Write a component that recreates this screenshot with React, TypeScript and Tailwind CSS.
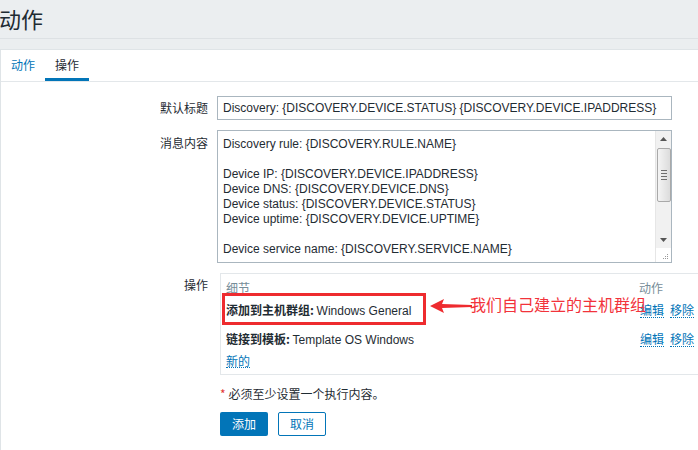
import React from "react";

const messageLines = [
  "Discovery rule: {DISCOVERY.RULE.NAME}",
  "",
  "Device IP: {DISCOVERY.DEVICE.IPADDRESS}",
  "Device DNS: {DISCOVERY.DEVICE.DNS}",
  "Device status: {DISCOVERY.DEVICE.STATUS}",
  "Device uptime: {DISCOVERY.DEVICE.UPTIME}",
  "",
  "Device service name: {DISCOVERY.SERVICE.NAME}",
];

const operations = [
  { label: "添加到主机群组:", value: "Windows General" },
  { label: "链接到模板:", value: "Template OS Windows" },
];

const FakeScrollbar = () => {
  return (
    <div className="w-[16px] h-full bg-[#f1f1f1] flex flex-col items-center border-l border-[#e6e6e6]">
      <div className="h-[16px] flex items-center justify-center">
        <svg width="7" height="4" viewBox="0 0 7 4">
          <path d="M0 4 L3.5 0 L7 4 Z" fill="#555" />
        </svg>
      </div>
      <div className="mt-[1px] w-[14px] h-[54px] rounded-[2px] border border-[#a9a9a9] bg-gradient-to-r from-[#f4f4f4] to-[#dcdcdc] flex flex-col items-center justify-center gap-[2px]">
        <div className="w-[6px] h-[1px] bg-[#6d6d6d]" />
        <div className="w-[6px] h-[1px] bg-[#6d6d6d]" />
        <div className="w-[6px] h-[1px] bg-[#6d6d6d]" />
        <div className="w-[6px] h-[1px] bg-[#6d6d6d]" />
      </div>
      <div className="flex-1" />
      <div className="h-[16px] flex items-center justify-center">
        <svg width="7" height="4" viewBox="0 0 7 4">
          <path d="M0 0 L3.5 4 L7 0 Z" fill="#555" />
        </svg>
      </div>
      <div className="h-[14px] w-full bg-white flex items-end justify-end pr-[2px] pb-[2px]">
        <svg width="7" height="7" viewBox="0 0 7 7">
          <rect x="5" y="1" width="1" height="1" fill="#999" />
          <rect x="3" y="3" width="1" height="1" fill="#999" />
          <rect x="5" y="3" width="1" height="1" fill="#999" />
          <rect x="1" y="5" width="1" height="1" fill="#999" />
          <rect x="3" y="5" width="1" height="1" fill="#999" />
          <rect x="5" y="5" width="1" height="1" fill="#999" />
        </svg>
      </div>
    </div>
  );
};

const App = () => {
  return (
    <div className="w-[698px] h-[450px] overflow-hidden bg-[#ebeef0] text-[12px] text-[#1f2c33] font-['Liberation_Sans','Noto_Sans_CJK_SC',sans-serif]">
      {/* page title */}
      <div className="h-[39px] border-b border-[#dde1e4] flex items-center">
        <h1 className="text-[22px] leading-none text-[#1f2c33] font-['Noto_Sans_CJK_SC',sans-serif] -ml-[1px] -mt-[2px]">
          动作
        </h1>
      </div>
      <div className="h-[10px]" />
      <div className="h-[401px] bg-white border-l border-t border-[#dfe4e7]">
        {/* tabs */}
        <div className="h-[32px] border-b border-[#e3e7ea] flex">
          <div className="w-[44px] flex items-center justify-center text-[#0275b8] font-['Noto_Sans_CJK_SC',sans-serif] pb-[2px]">
            动作
          </div>
          <div className="w-[44px] flex items-center justify-center border-b-[3px] border-[#0275b8] font-['Noto_Sans_CJK_SC',sans-serif] pt-[1px]">
            操作
          </div>
        </div>

        {/* form */}
        <div className="pt-[14px] grid grid-cols-[207px_1fr] gap-x-[9px] font-['Noto_Sans_CJK_SC',sans-serif]">
          <div className="h-[24px] flex items-center justify-end">默认标题</div>
          <div className="w-[455px] h-[24px] border border-[#aab6bf] flex items-center px-[5px] font-['Liberation_Sans',sans-serif]">
            Discovery: {"{DISCOVERY.DEVICE.STATUS}"} {"{DISCOVERY.DEVICE.IPADDRESS}"}
          </div>

          <div className="mt-[10px] pt-[4px] text-right">消息内容</div>
          <div className="mt-[10px] w-[455px] h-[133px] border border-[#aab6bf] flex overflow-hidden">
            <div className="flex-1 pl-[5px] pt-[6px] leading-[15px] font-['Liberation_Sans',sans-serif]">
              {messageLines.map((line, i) => (
                <div key={i} className="h-[15px] whitespace-pre">
                  {line}
                </div>
              ))}
            </div>
            <FakeScrollbar />
          </div>

          <div className="mt-[10px] pt-[3px] text-right">操作</div>
          <div className="mt-[10px] ml-[3px] relative h-[102px] border-l border-t border-b border-[#e3e7ea] pl-[5px] pr-[4px] pt-[6px]">
            <div className="flex justify-between h-[16px] items-center text-[#768d99]">
              <span>细节</span>
              <span className="mr-[31px]">动作</span>
            </div>
            {operations.map((op) => (
              <div key={op.label} className="flex justify-between items-center h-[29px]">
                <span>
                  <b className="font-bold">{op.label}</b>{" "}
                  <span className="font-['Liberation_Sans',sans-serif]">{op.value}</span>
                </span>
                <span className="flex gap-[6px] text-[#0275b8]">
                  <span className="border-b border-dotted border-[#0275b8] leading-[14px]">编辑</span>
                  <span className="border-b border-dotted border-[#0275b8] leading-[14px]">移除</span>
                </span>
              </div>
            ))}
            <div className="h-[14px] flex items-center">
              <span className="text-[#0275b8] border-b border-dotted border-[#0275b8] leading-[13px]">新的</span>
            </div>

            {/* annotation overlay */}
            <div className="absolute left-[1px] top-[19px] w-[204px] h-[32px] border-[3px] border-[#ee2b2f]" />
            <svg className="absolute left-[209px] top-[25px]" width="42" height="14" viewBox="0 0 42 14">
              <path d="M0 7 L14 0 L12 5 L42 6 L42 8 L12 9 L14 14 Z" fill="#ee2b2f" />
            </svg>
            <div className="absolute left-[249px] top-[20px] text-[16px] leading-[20px] text-[#f2333b] whitespace-nowrap">
              我们自己建立的主机群组
            </div>
          </div>

          <div />
          <div className="mt-[11px] ml-[3px] h-[16px] flex items-center">
            <span className="text-[#e33734] mr-[3px]">*</span>
            <span>必须至少设置一个执行内容。</span>
          </div>

          <div />
          <div className="mt-[10px] ml-[3px] flex gap-[10px]">
            <button className="w-[48px] h-[24px] bg-[#0275b8] text-white rounded-[2px]">添加</button>
            <button className="w-[48px] h-[24px] bg-white text-[#0275b8] border border-[#0275b8] rounded-[2px]">取消</button>
          </div>
        </div>
      </div>
    </div>
  );
};

export default App;
